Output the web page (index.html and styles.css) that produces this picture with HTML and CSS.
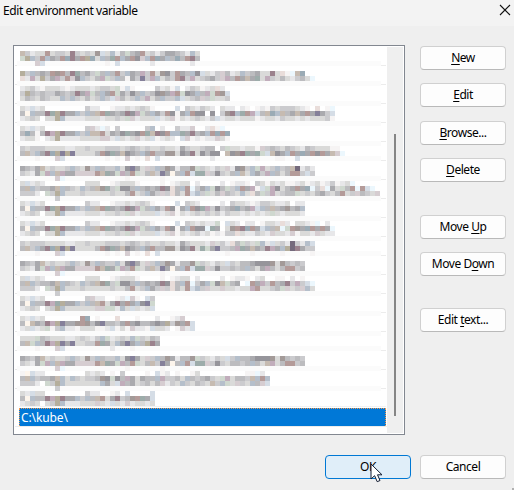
FILE: index.html
```
<!DOCTYPE html>
<html lang="en">
<head>
<meta charset="utf-8">
<title>Edit environment variable</title>
<link rel="stylesheet" href="styles.css">
</head>
<body>
<div class="dialog">
  <header class="titlebar">
    <h1 class="title">Edit environment variable</h1>
    <svg class="close" viewBox="0 0 12 12"><path d="M1 1 11 11M11 1 1 11"/></svg>
  </header>
  <main class="content">
    <div class="list">
      <div class="items">
        <svg id="mosaic" class="mosaic" viewBox="14 46 373 361"></svg>
        <div class="selected">C:\kube\</div>
        <div class="rule"></div>
      </div>
      <div class="scrollbar"><div class="thumb"></div></div>
    </div>
    <div class="actions">
      <button class="btn"><span><u>N</u>ew</span></button>
      <button class="btn"><span><u>E</u>dit</span></button>
      <button class="btn browse"><span><u>B</u>rowse...</span></button>
      <button class="btn"><span><u>D</u>elete</span></button>
      <button class="btn up"><span>Move <u>U</u>p</span></button>
      <button class="btn"><span>Move D<u>o</u>wn</span></button>
      <button class="btn text"><span>Edit <u>t</u>ext...</span></button>
    </div>
  </main>
  <footer class="footer">
    <button class="btn ok"><span>OK</span></button>
    <button class="btn"><span>Cancel</span></button>
  </footer>
  <svg class="cursor" viewBox="0 0 14 20"><path d="M1 1V16L4.6 12.7 7.2 18.7 10 17.5 7.5 11.8H12Z"/></svg>
  <div class="grip"></div>
</div>
<script src="mosaic.js"></script>
</body>
</html>
```
FILE: styles.css
```
* { box-sizing: border-box; }
body { margin: 0; font-family: "Noto Sans", "Open Sans", sans-serif; font-size: 12px; color: #000; }
.dialog { position: relative; width: 514px; height: 490px; background: #efefef; overflow: hidden; }
.titlebar { height: 26px; background: #f3f3f3; display: flex; justify-content: space-between; padding: 0 3px; }
.title { margin: 0; font-size: 12px; font-weight: 400; line-height: 22px; letter-spacing: -0.42px; }
.close { width: 12px; height: 12px; margin-top: 4px; fill: none; stroke: #111; stroke-width: 1.1; }
.content { display: flex; padding: 19px 8px 0 13px; gap: 15px; }
.list { width: 392px; height: 390px; border: 1px solid #828790; background: #fff; display: flex; flex: none; }
.items { width: 373px; flex: none; }
.mosaic { display: block; width: 373px; height: 361px; }
.selected { margin: 1px 1px 0 5px; height: 18px; background: #0078d7; border: 1px dotted #f29a50; border-bottom: 0; color: #fff; line-height: 18px; padding-left: 1px; letter-spacing: -0.1px; }
.rule { height: 1px; margin-left: 1px; background: #ececec; }
.scrollbar { width: 16px; height: 386px; margin-top: 1px; background: #efefef; padding: 87px 0 0 7px; }
.thumb { width: 2px; height: 282px; background: #858585; }
.actions { display: flex; flex-direction: column; gap: 13px; padding-top: 1px; }
.btn { width: 86px; height: 24px; flex: none; padding: 0; border: 1px solid #d0d0d0; border-bottom-color: #b9b9b9; border-radius: 4px; background: #fdfdfd; font: inherit; color: #000; line-height: 22px; letter-spacing: -0.45px; }
.btn span { display: block; height: 22px; }
.btn u { text-decoration-thickness: 1px; text-underline-offset: 2px; text-decoration-skip-ink: none; }
.browse { margin-top: 1px; }
.up { margin-top: 20px; }
.text { margin-top: 19px; }
.footer { display: flex; justify-content: flex-end; gap: 9px; padding: 20px 8px 0; }
.ok { border-color: #0078d4; background: #e0eef9; }
.cursor { position: absolute; left: 370px; top: 463px; width: 14px; height: 20px; fill: #fff; stroke: #111b30; stroke-width: 1; }
.grip { position: absolute; right: 0; bottom: 0; width: 2px; height: 2px; background: #b0b0b0; }
```
FILE: mosaic.js
```
// Colour key for the 5px cells that obscure the list entries.
const tones = {
  a: '#f6f4f4', b: '#e7e7e9', c: '#dadad9', d: '#cbcbce', e: '#bcbcbf', f: '#aaaaae',
  g: '#96959b', h: '#85809a', r: '#9b828d', q: '#b49b99', p: '#c6bbb1', s: '#d6cdd1',
  u: '#b5bfcb', v: '#9babb5', w: '#d5dde6', x: '#cfd8cf', k: '#b5ae9c', l: '#a39a98',
  y: '#ecf7fd', z: '#fdf5ec', t: '#e9ddda', m: '#c1adbb', n: '#9dacaa', o: '#756a7c'
};
// Cells shared by several rows, one set for each vertical alignment.
const head = {
  A: ['cbwbc........dbb.', 'ezueernkrffuduepq', 'bcdc.cckubbbbcccb'],
  B: ['dcdddccccbbccdccc', 'epdufrvkhkhcccceq', '...a...sw........'],
  C: ['fedfpcdccdudcldue', 'dcbfxmupmffssssqp', '.......sy........'],
  D: ['cwbcb........ccc.', 'epudeefpuedcudepl', 'dddb.xdkucccdcccc', '.......d.........']
};
const mid = {
  A: ['.abbcbcdca....w.dcb', 'nfefrgmxeufdqgafuqg', 'ccdcxsbcccwbcsacbcd'],
  B: ['dddcdedcdccdccbfdcc', 'gnfpgfeufqeellcgfrc', 'a.a.s.a.t.w........'],
  C: ['dducghfcsduelfbeelx', 'nfxmeqxcepdhfzeuqwn', '....a......a.......'],
  D: ['.abccca....a.abcc.b', 'ndxggeuefefrgteuqyd', 'cdcceqcdufdsdtecqwu', '...................']
};
const rows = [
  [51, ['pdbccqcddcrdcdclwcubexefqcdbdffedbuc', 'xkudqufeqvrfqkvcuenqufqgsuqvfueveqre', '...sw............a.w......b.......b.']],
  [71, ['kduefeqlqernefdxeueqdufemdqclgdqfeug', 'tbmckdfmdqsgudcemxdueafdhdmucedqrdmc'], 'wcbdsebcudefccrctaypv', 'defdsmeqfpfncmdcecbdecy'],
  [86, ['bcdbacccbabcccbcddcxawa....dbcaw.bdc', 'dkededdfederfmxeufqxfdgeudeglfmqxgfu', 'cedcedccududcecdudwsecdudmceudduwcde'], 'abctb', 'emxqlw', 'sdxccd'],
  [106, 'A', 'dcb.cbb.ba.abadcdddcba.t.ay', 'g.g.dlrunqmwepvupefpfqfhfdw', 'cbdwbccbcccabccbdccbcbcccda'],
  [126, ['cbwbc........dsbyb.d.....du.b..dbbs', 'eveaermkrffuduppqcfegnfgqnprgquunfre', 'bcca.bckbbbbccccssbwcbcsbcwabcb.wsab'], '.btay', 'fuqvqv', 'abbsca'],
  [146, 'B', 'dee.dxccbccasdedcedcbedcccaa', 'gegg.pglrnfnxwpgfuqfvfqgqfpsy', '..b........a...aa..w........'],
  [166, 'C', 'dcbdcsbglduxmcdudepobdb', 'nsdgdceupcufdmueceqqdwd'],
  [181, 'D', '....b.abba.dcacbcaabcabcabdabcy', 'fuxgexduqfmawxmgcefqfvydtyfcxeqy', 'dxcesedcuctexdmcdeexcdcefdceqcds', '', ''],
  [201, 'A', '....b.dccbabddcbbc.bb', 'nmdgdefvefmwuepeflefu', 'cdcdbdccbcbcbcxcbcccb'],
  [221, 'A', 'cbbx.wcb.bb.accbtb.ccbay.b.', 'gynf.clqrvqfwuepyxqlfvqfqfy', 'bcabaddtcbbdcbsccbsaccbscbb'],
  [241, 'B', 'cbscdbtexdcxubwcdbodbuw', 'nxfhddemnfpfermfukorfdd', '.....a....a.....a.....a'],
  [261, 'C', 'dcbdcwdceefggglcleded', 'nsdgddedeuecfmeceqqde'],
  [276, 'D', '....b.abba.bc..aa.b.a.', 'fuxgpxef.yqfmdqefrdmdwy', 'dsccsccbccmqccdexscdsuc'],
  [296, ['cbwbc........dsbb..abysa.wd', 'ezueermnkffuduepqcfrfqfughx', 'bcdc.cdkuccccccssxxbucwcbcw']],
  [316, ['cbwbc.......qv.a...t...a...b..abs.', 'ezpfermkhfflqlegheedfqfgeefgfkdlfqw', 'bcwbcxadubbacccaabwacasbbawccb.asbw']],
  [336, ['cccxedcccbbcdcbduxbcdcuxdced', 'epxuermkhfhccddqnfcufhfuekrf', '...a...sw.........b...a....']],
  [356, 'C', 'dcbdcwdueefggglcleded', 'nsdgdceedeuecpmceqqde'],
  [371, ['azwbb........cbcb.a.d....a.wab.a..ac', 'epudeefpucudcddelgxgemfcfeeumddecued', 'dddb.xdkucccccccufcwmefcdecesbdcudce', '.......d............................'], '.........aayb.', 'efdcxmceedpuqu', 'dcpduxcsdcuesw'],
  [391, ['cbwcc........dbb..ab.w....w', 'ezueermkrffuduepqcfrdelqnfw', 'bcdc.cdkubbbcccscbwcbsbccbc']]
];
// The longest entry reaches the right edge with an ellipsis.
const overflow = [['y', 186], ['c', 191]];
const cells = [];
const rect = (x, y, w, h, fill) =>
  cells.push(`<rect x="${x}" y="${y}" width="${w}" height="${h}" fill="${fill}" shape-rendering="crispEdges"/>`);

// Row separators, softened to the same grid.
for (let y = 65; y < 408; y += 19) {
  if (y < 400) rect(17, 51 + 5 * Math.floor((y - 51) / 5), 364, 5, '#fbfbfb');
  rect(15, y, 2, 1, '#e8e8e8');
  rect(381, y, 5, 1, '#ececec');
}
const drawBand = (band, x, y) => [...band].forEach((key, i) => {
  if (tones[key]) rect(x + i * 5, y, 5, 5, tones[key]);
});
rows.forEach(([top, start, ...tails]) => {
  const bands = typeof start === 'string'
    ? head[start].map((part, i) => part + mid[start][i]) : start;
  bands.forEach((band, i) => drawBand(band, 20, top + i * 5));
  tails.forEach((tail, i) => drawBand(tail, 200, top + i * 5));
});
overflow.forEach(([key, y]) => drawBand(key === 'y' ? 'qwy' : 'edcs', 360, y));
rect(19, 406, 367, 1, '#f2f2f2');
document.getElementById('mosaic').innerHTML = cells.join('');
```
